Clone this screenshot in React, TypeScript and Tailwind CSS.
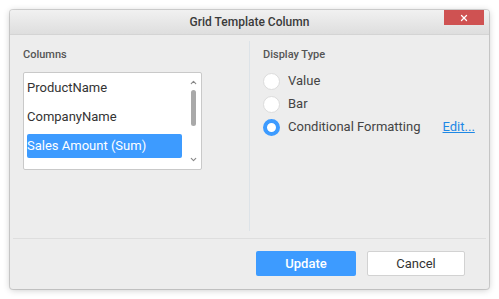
import { ChevronDown, ChevronUp, X } from "lucide-react";

const options = ["Value", "Bar", "Conditional Formatting"];

function Radio({ checked }: { checked?: boolean }) {
  if (checked) {
    return <span className="h-[17px] w-[17px] flex-shrink-0 rounded-full border-[4px] border-[#3d9bff] bg-white" />;
  }
  return <span className="h-[17px] w-[17px] flex-shrink-0 rounded-full border border-[#dcdcdc] bg-white" />;
}

export default function App() {
  return (
    <div className="h-[299px] w-[499px] bg-white p-[10px] font-['Roboto',sans-serif]">
      <div className="flex h-[279px] w-[479px] flex-col overflow-hidden rounded-[3px] bg-[#ededed] shadow-[0_0_0_1px_rgba(0,0,0,0.14),0_1px_7px_rgba(0,0,0,0.22)]">
        {/* title bar */}
        <div className="relative flex h-[25px] flex-shrink-0 items-center justify-center border-b border-[#d4d4d4] bg-gradient-to-b from-[#f1f1f1] to-[#dedede]">
          <span className="text-[12px] font-medium text-[#3a3a3a]">Grid Template Column</span>
          <button
            type="button"
            className="absolute right-[5px] top-0 flex h-[15px] w-[40px] items-center justify-center bg-[#cf5252]"
          >
            <X className="h-[10px] w-[10px] text-white" strokeWidth={3} />
          </button>
        </div>

        {/* body */}
        <div className="flex h-[203px] flex-shrink-0 pb-[7px] pt-[6px]">
          <div className="w-[239px] px-[13px] pt-[6px]">
            <p className="text-[11px] font-medium text-[#555]">Columns</p>
            <div className="mt-[8px] flex h-[98px] w-[179px] overflow-hidden rounded-[2px] border border-[#c9c9c9] bg-white">
              <div className="flex flex-1 flex-col gap-[5px] pl-[3px] pt-[3px] text-[13px] text-[#333]">
                <div className="flex h-[24px] flex-shrink-0 items-center">ProductName</div>
                <div className="flex h-[24px] flex-shrink-0 items-center">CompanyName</div>
                <div className="flex h-[24px] w-[155px] flex-shrink-0 items-center rounded-[2px] bg-[#3d9bff] text-white">
                  Sales Amount (Sum)
                </div>
              </div>
              <div className="flex w-[16px] flex-col items-center pt-[5px]">
                <ChevronUp className="h-[9px] w-[9px] text-[#888]" strokeWidth={3} />
                <div className="mt-[3px] h-[36px] w-[5px] rounded-full bg-[#a9a9a9]" />
                <div className="flex-1" />
                <ChevronDown className="mb-[5px] h-[9px] w-[9px] text-[#888]" strokeWidth={3} />
              </div>
            </div>
          </div>
          <div className="w-px bg-[#dde3e8]" />
          <div className="flex-1 pl-[13px] pt-[6px]">
            <p className="text-[11px] font-medium text-[#555]">Display Type</p>
            <div className="mt-[9px] flex flex-col gap-[6px]">
              {options.map((o, i) => (
                <div key={o} className="flex h-[17px] items-center gap-[8px] text-[13px] text-[#444]">
                  <Radio checked={i === 2} />
                  <span>{o}</span>
                  {i === 2 && (
                    <a className="ml-[14px] text-[#1e88e5] underline decoration-[#1e88e5]">Edit...</a>
                  )}
                </div>
              ))}
            </div>
          </div>
        </div>

        {/* footer */}
        <div className="mx-[3px] h-px bg-[#dedede]" />
        <div className="flex justify-end gap-[11px] pr-[24px] pt-[12px]">
          <button
            type="button"
            className="flex h-[25px] w-[100px] items-center justify-center rounded-[2px] bg-[#3d9bff] text-[13px] font-medium text-white"
          >
            Update
          </button>
          <button
            type="button"
            className="flex h-[25px] w-[98px] items-center justify-center rounded-[2px] border border-[#d2d2d2] bg-white text-[13px] text-[#333]"
          >
            Cancel
          </button>
        </div>
      </div>
    </div>
  );
}
